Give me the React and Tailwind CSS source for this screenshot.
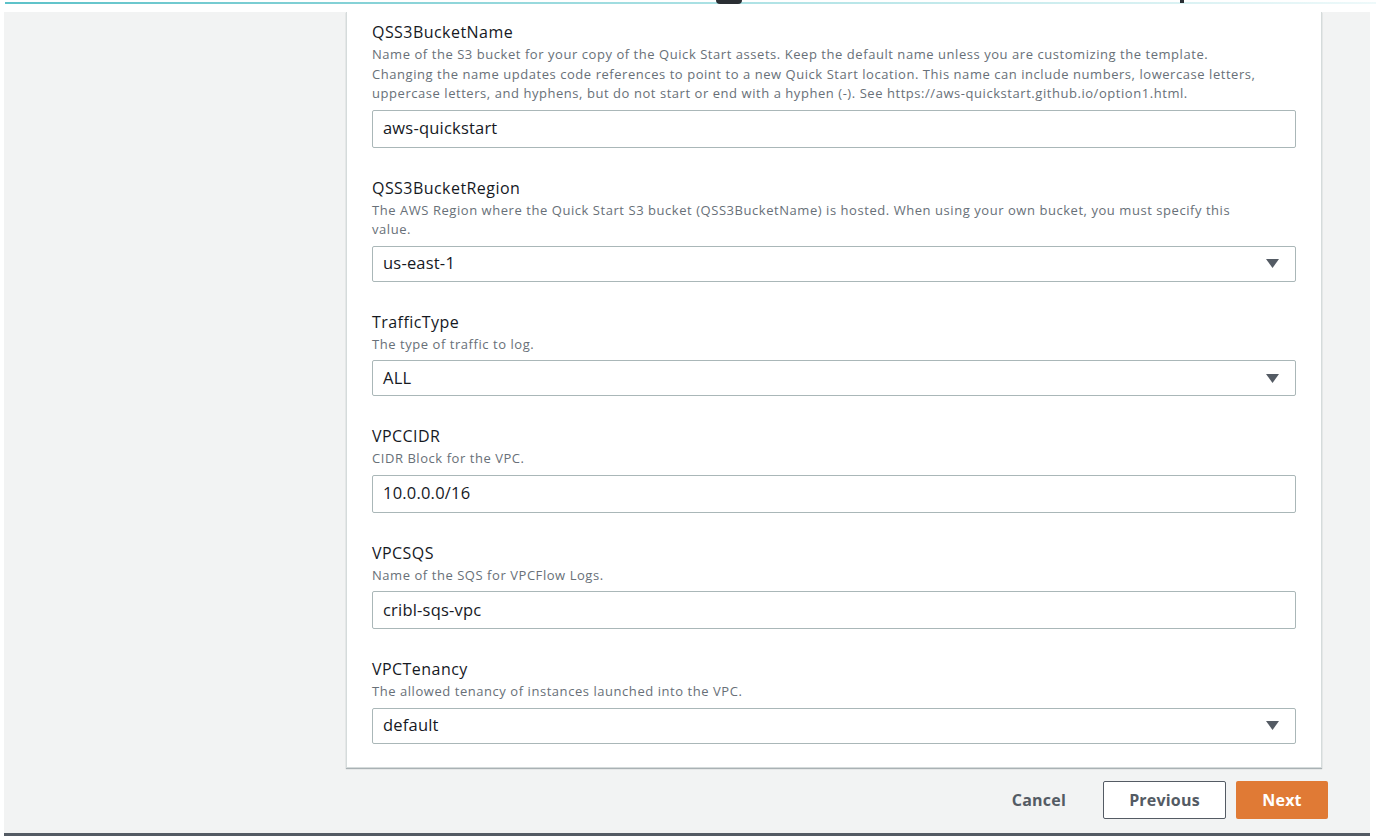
const FONT = { fontFamily: '"Open Sans", "Noto Sans", sans-serif' };

const FIELDS = [
  {
    label: 'QSS3BucketName',
    desc: [
      'Name of the S3 bucket for your copy of the Quick Start assets. Keep the default name unless you are customizing the template.',
      'Changing the name updates code references to point to a new Quick Start location. This name can include numbers, lowercase letters,',
      'uppercase letters, and hyphens, but do not start or end with a hyphen (-). See https://aws-quickstart.github.io/option1.html.',
    ],
    value: 'aws-quickstart',
  },
  {
    label: 'QSS3BucketRegion',
    desc: [
      'The AWS Region where the Quick Start S3 bucket (QSS3BucketName) is hosted. When using your own bucket, you must specify this',
      'value.',
    ],
    value: 'us-east-1',
    select: true,
  },
  { label: 'TrafficType', desc: ['The type of traffic to log.'], value: 'ALL', select: true },
  { label: 'VPCCIDR', desc: ['CIDR Block for the VPC.'], value: '10.0.0.0/16' },
  { label: 'VPCSQS', desc: ['Name of the SQS for VPCFlow Logs.'], value: 'cribl-sqs-vpc' },
  {
    label: 'VPCTenancy',
    desc: ['The allowed tenancy of instances launched into the VPC.'],
    value: 'default',
    select: true,
  },
];

function Field({ label, desc, value, select }) {
  return (
    <div className="flex flex-col">
      <div className="text-[16px] leading-[22px] tracking-[0.45px] text-[#16191f]">{label}</div>
      <div className="mt-[2px] whitespace-nowrap text-[13px] leading-[19.5px] tracking-[0.55px] text-[#687078]">
        {desc.map((d) => (
          <div key={d}>{d}</div>
        ))}
      </div>
      <div
        className={`mt-[6px] flex items-center justify-between rounded-[2px] border border-[#aab7b8] bg-white pl-[10px] pr-[16px] text-[16.5px] tracking-[0.2px] text-[#16191f] ${
          select ? 'h-[36px]' : 'h-[38px]'
        }`}
      >
        <span>{value}</span>
        {select && (
          <svg width="13" height="9" viewBox="0 0 13 9">
            <polygon points="0,0 13,0 6.5,9" fill="#545b64" />
          </svg>
        )}
      </div>
    </div>
  );
}

export default function App() {
  return (
    <div className="flex h-[836px] w-[1376px] flex-col overflow-hidden bg-white" style={FONT}>
      {/* header remnant */}
      <div className="relative h-[12px] shrink-0">
        <div className="ml-[5px] mt-[2px] h-[2px] bg-gradient-to-r from-[#5cc2c9] via-[#a8e0e3] to-[#eef9fa]" />
        <div className="absolute left-[716px] top-0 h-[4px] w-[26px] rounded-b-full bg-[#2a2e33]" />
        <div className="absolute left-[1180px] top-0 h-[3px] w-[4px] bg-[#2a2e33]" />
      </div>

      <div className="mr-[6px] ml-[4px] flex flex-1 border-b-[3px] border-[#545b64] bg-[#f2f3f3]">
        <div className="w-[342px] shrink-0" />

        <div className="flex w-[976px] shrink-0 flex-col">
          <div className="flex flex-col gap-[29px] border-x border-b border-[#d5dbdb] bg-white px-[25px] pt-[9px] pb-[23px] shadow-[0_1px_1px_0_rgba(0,28,36,0.3)]">
            {FIELDS.map((f) => (
              <Field key={f.label} {...f} />
            ))}
          </div>

          <div className="-mr-[6px] mt-[13px] flex items-center justify-end gap-[10px] text-[16px] font-bold tracking-[0.2px]">
            <button className="mr-[7px] px-[20px] text-[#545b64]">Cancel</button>
            <button className="h-[38px] w-[123px] rounded-[2px] border border-[#545b64] bg-white text-[#545b64]">
              Previous
            </button>
            <button className="h-[38px] w-[92px] rounded-[2px] bg-[#e07a35] text-white">Next</button>
          </div>
        </div>

        <div className="flex-1" />
      </div>
    </div>
  );
}
